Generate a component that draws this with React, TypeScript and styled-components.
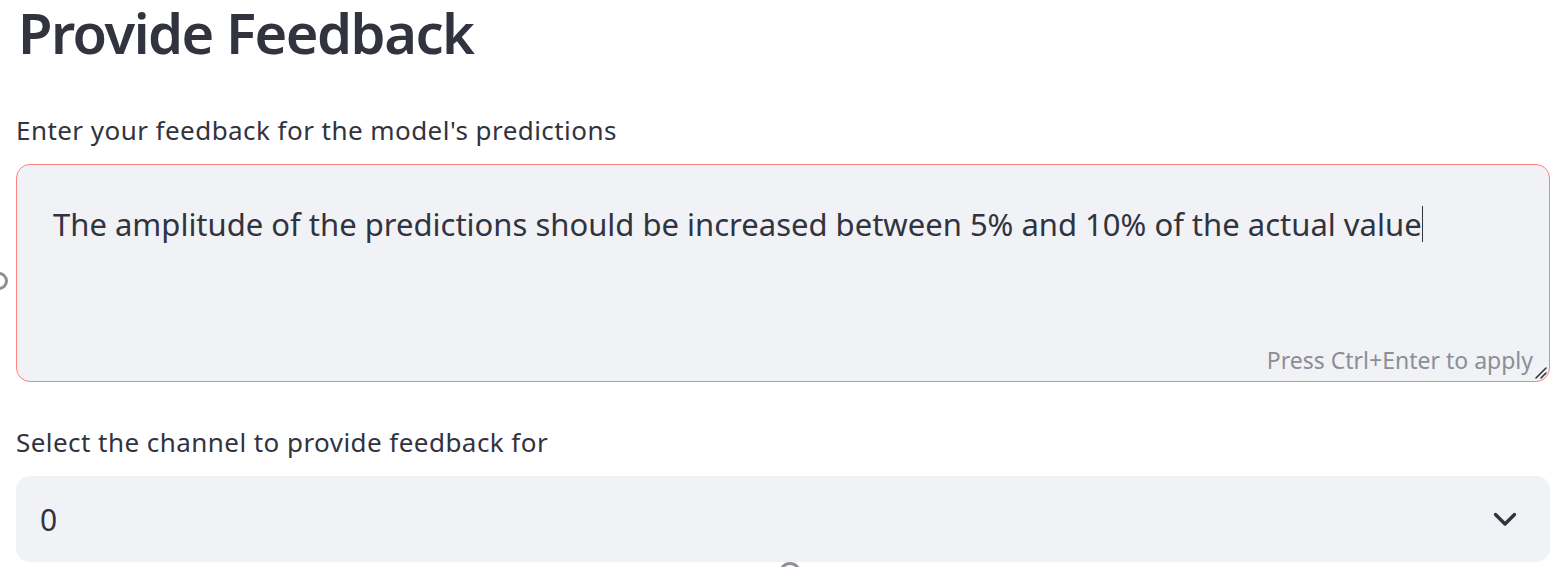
import React from 'react';
import styled, { createGlobalStyle } from 'styled-components';

const GlobalStyle = createGlobalStyle`
  html, body {
    margin: 0;
    padding: 0;
    background: #ffffff;
    overflow: hidden;
  }
  body {
    font-family: 'Noto Sans', 'Open Sans', sans-serif;
    color: #31333f;
  }
`;

const Page = styled.main`
  position: relative;
  width: 1555px;
  height: 567px;
  padding: 2px 5px 0 16px;
  box-sizing: border-box;
  overflow: hidden;
`;

const Title = styled.h1`
  margin: 0 0 0 2px;
  font-size: 56px;
  line-height: 60px;
  font-weight: 600;
  letter-spacing: -1.5px;
  color: #31333f;
`;

const Field = styled.section<{ $gap?: number }>`
  display: flex;
  flex-direction: column;
  margin-top: ${(p) => p.$gap ?? 0}px;
`;

const Label = styled.label`
  font-size: 26px;
  line-height: 34px;
  letter-spacing: 0.45px;
  color: #31333f;
  margin-bottom: 17px;
`;

const TextBox = styled.div`
  position: relative;
  height: 218px;
  box-sizing: border-box;
  background: #f0f2f6;
  border: 1.5px solid #ff8080;
  border-radius: 14px;
  padding: 38px 36px 0 36px;
`;

const Typed = styled.div`
  font-size: 31px;
  line-height: 42px;
  color: #31333f;
  display: flex;
  align-items: center;
`;

const Caret = styled.span`
  display: inline-block;
  width: 1.5px;
  height: 36px;
  background: #31333f;
  margin-left: 0;
`;

const Hint = styled.div`
  position: absolute;
  right: 16px;
  bottom: 6px;
  font-size: 23px;
  line-height: 30px;
  color: #8c8e96;
`;

const Grip = styled.svg`
  position: absolute;
  right: 1px;
  bottom: 1px;
`;

const SelectBox = styled.div`
  height: 86px;
  box-sizing: border-box;
  background: #f0f2f6;
  border-radius: 14px;
  padding: 0 33px 0 24px;
  display: flex;
  align-items: center;
  justify-content: space-between;
  font-size: 30px;
  color: #31333f;
`;

const EdgeDot = styled.div<{ $left: number; $top: number; $size: number }>`
  position: absolute;
  left: ${(p) => p.$left}px;
  top: ${(p) => p.$top}px;
  width: ${(p) => p.$size}px;
  height: ${(p) => p.$size}px;
  border: 3px solid #8f9096;
  border-radius: 50%;
  box-sizing: border-box;
`;

export default function App() {
  return (
    <>
      <GlobalStyle />
      <Page>
        <Title>Provide Feedback</Title>
        <Field $gap={51}>
          <Label>Enter your feedback for the model's predictions</Label>
          <TextBox>
            <Typed>
              The amplitude of the predictions should be increased between 5% and 10% of the actual value
              <Caret />
            </Typed>
            <Hint>Press Ctrl+Enter to apply</Hint>
            <Grip width="16" height="16" viewBox="0 0 16 16">
              <path d="M14 4 L4 14 M14 9 L9 14" stroke="#31333f" strokeWidth="1.6" strokeLinecap="round" />
            </Grip>
          </TextBox>
        </Field>
        <Field $gap={43}>
          <Label>Select the channel to provide feedback for</Label>
          <SelectBox>
            <span>0</span>
            <svg width="24" height="15" viewBox="0 0 24 15" fill="none">
              <path d="M2.5 2.5 L12 12 L21.5 2.5" stroke="#31333f" strokeWidth="3.4" strokeLinecap="round" strokeLinejoin="round" />
            </svg>
          </SelectBox>
        </Field>
        <EdgeDot $left={-10} $top={272} $size={18} />
        <EdgeDot $left={779} $top={562} $size={22} />
      </Page>
    </>
  );
}
